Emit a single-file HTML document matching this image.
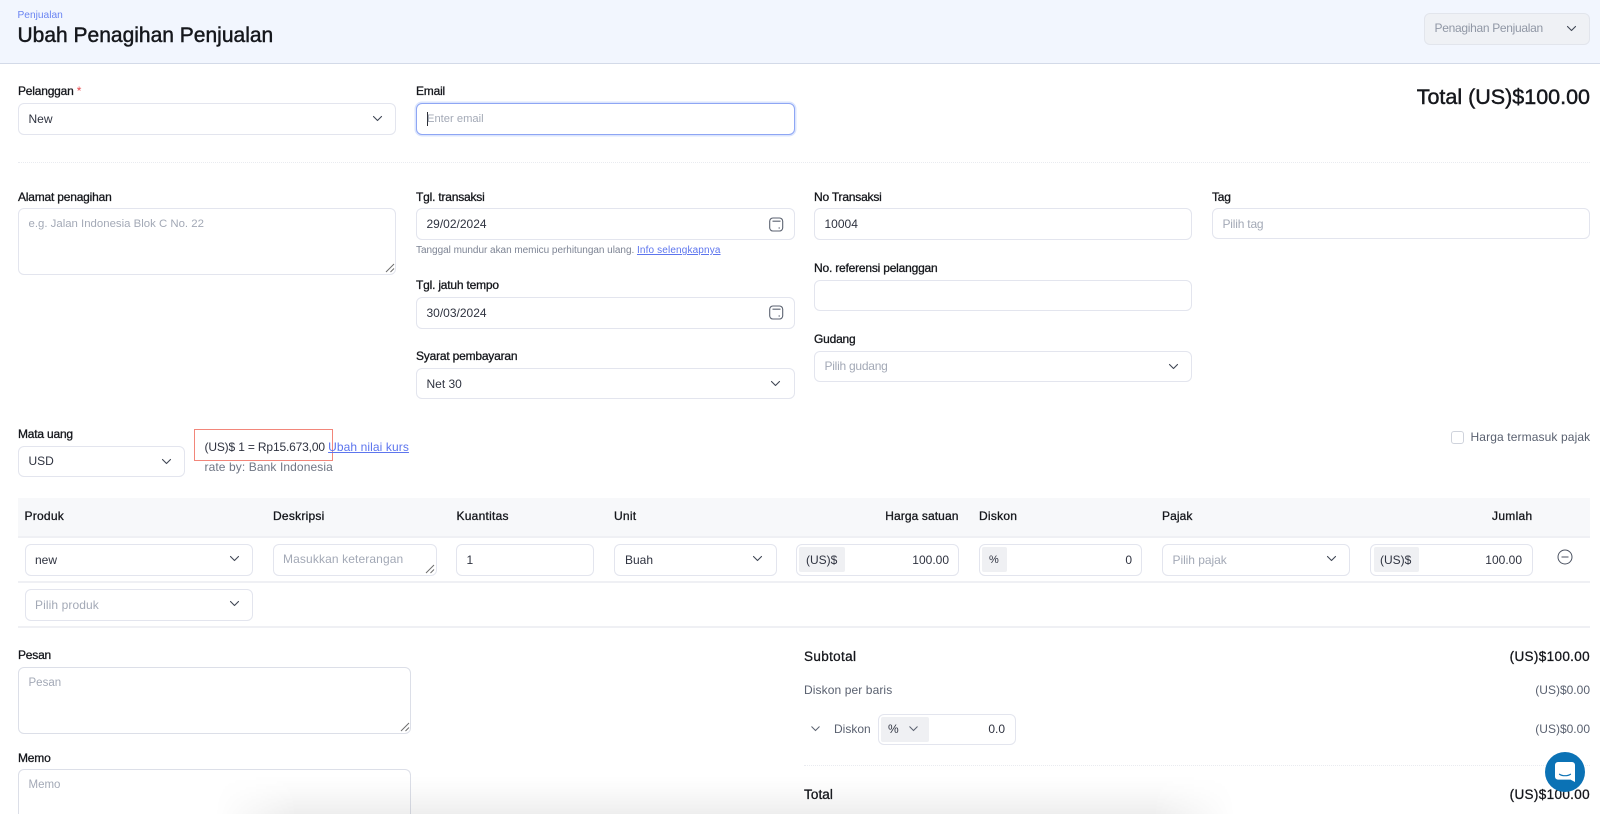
<!DOCTYPE html>
<html lang="id"><head><meta charset="utf-8"><title>Ubah Penagihan Penjualan</title>
<style>
html,body{margin:0;padding:0;background:#fff;width:1600px;height:814px;overflow:hidden}
#w{position:absolute;left:0;top:0;width:1600px;height:814px;overflow:hidden;font-family:"Liberation Sans",sans-serif;font-size:12px;color:#2f3340;filter:blur(.3px)}
.t{position:absolute;line-height:16px;height:16px;white-space:nowrap}
.r{text-align:right}
.l{color:#15171c;-webkit-text-stroke:.3px #15171c;letter-spacing:-.2px}
.h{letter-spacing:.25px}
.p{color:#a3a9b6}
.m{color:#5a6170}
a{color:#5d75ee;text-decoration:underline}
.b{position:absolute;box-sizing:border-box;background:#fff;border:1px solid #e3e5ee;border-radius:6px}
.g{position:absolute;background:#eff0f3;border-radius:2px}
svg{position:absolute;overflow:visible;fill:none}
.c{stroke:#3f4654;stroke-width:1.1;stroke-linecap:round;stroke-linejoin:round}
.ln{position:absolute;background:#eff0f4}
.d{position:absolute;height:0;border-top:1px dotted #e9ebf0}
.s{font-size:13.5px;letter-spacing:.35px;color:#15171c;-webkit-text-stroke:.3px #15171c}
</style></head><body><div id="w">

<div style="position:absolute;left:0;top:0;width:1600px;height:63px;background:#f2f6fe;border-bottom:1px solid #d3dae8;box-sizing:content-box"></div>
<div class="t" style="left:17.5px;top:7.5px;font-size:10.2px;color:#6a84f2">Penjualan</div>
<div class="t" style="left:17.5px;top:24px;line-height:24px;height:24px;font-size:21px;color:#15171c;-webkit-text-stroke:.45px #15171c">Ubah Penagihan Penjualan</div>
<div class="b" style="left:1424px;top:13px;width:166px;height:32px;background:#eff1f5;border-color:#e2e5ec"></div>
<div class="t p" style="left:1434.5px;top:20px;color:#9097a5;letter-spacing:-.3px">Penagihan Penjualan</div>
<svg style="left:1566px;top:25px" width="12" height="8"><path class="c" d="M1.5 1.5l4 4 4-4"/></svg>

<div class="t l" style="left:18px;top:83px">Pelanggan <span style="color:#e5484d;-webkit-text-stroke:0">*</span></div>
<div class="b" style="left:18px;top:103px;width:378px;height:32px"></div>
<div class="t" style="left:28.5px;top:111px">New</div>
<svg style="left:372px;top:115px" width="12" height="8"><path class="c" d="M1.5 1.5l4 4 4-4"/></svg>

<div class="t l" style="left:416px;top:83px">Email</div>
<div class="b" style="left:416px;top:103px;width:379px;height:32px;border-color:#8ea6f4;box-shadow:0 0 0 1.5px #dbe5fd"></div>
<div style="position:absolute;left:426.5px;top:112px;width:1px;height:14px;background:#2a2d35"></div>
<div class="t p" style="left:427px;top:111px;font-size:11.2px">Enter email</div>

<div class="t r" style="right:10px;top:85px;line-height:24px;height:24px;font-size:21.5px;color:#15171c;-webkit-text-stroke:.45px #15171c">Total (US)$100.00</div>
<div class="d" style="left:18px;top:162px;width:1572px"></div>

<div class="t l" style="left:18px;top:189px">Alamat penagihan</div>
<div class="b" style="left:18px;top:208px;width:378px;height:67px"></div>
<div class="t p" style="left:28.5px;top:216px;font-size:11.4px">e.g. Jalan Indonesia Blok C No. 22</div>
<svg style="left:385px;top:263px" width="10" height="10"><path d="M1 9L9 1M5.5 9L9 5.5" stroke="#6e6e6e" stroke-width="1"/></svg>

<div class="t l" style="left:416px;top:189px">Tgl. transaksi</div>
<div class="b" style="left:416px;top:208px;width:379px;height:32px"></div>
<div class="t" style="left:426.5px;top:216px">29/02/2024</div>
<svg style="left:769px;top:217px" width="15" height="15"><rect class="c" x=".7" y="1" width="13" height="13" rx="3.2" style="stroke:#5b6270"/><path d="M3.5 4.2h8M9.5 11h1.5" stroke="#5b6270" stroke-width="1.1"/></svg>
<div class="t" style="left:416px;top:243px;font-size:10px;color:#7d8494;letter-spacing:-.03px">Tanggal mundur akan memicu perhitungan ulang. <a style="letter-spacing:.14px">Info selengkapnya</a></div>

<div class="t l" style="left:416px;top:277px">Tgl. jatuh tempo</div>
<div class="b" style="left:416px;top:297px;width:379px;height:32px"></div>
<div class="t" style="left:426.5px;top:305px">30/03/2024</div>
<svg style="left:769px;top:305px" width="15" height="15"><rect class="c" x=".7" y="1" width="13" height="13" rx="3.2" style="stroke:#5b6270"/><path d="M3.5 4.2h8M9.5 11h1.5" stroke="#5b6270" stroke-width="1.1"/></svg>

<div class="t l" style="left:416px;top:348px">Syarat pembayaran</div>
<div class="b" style="left:416px;top:368px;width:379px;height:31px"></div>
<div class="t" style="left:426.5px;top:376px">Net 30</div>
<svg style="left:770px;top:380px" width="12" height="8"><path class="c" d="M1.5 1.5l4 4 4-4"/></svg>

<div class="t l" style="left:814px;top:189px">No Transaksi</div>
<div class="b" style="left:814px;top:208px;width:378px;height:32px"></div>
<div class="t" style="left:824.5px;top:216px">10004</div>
<div class="t l" style="left:814px;top:260px">No. referensi pelanggan</div>
<div class="b" style="left:814px;top:280px;width:378px;height:31px"></div>
<div class="t l" style="left:814px;top:331px">Gudang</div>
<div class="b" style="left:814px;top:351px;width:378px;height:31px"></div>
<div class="t p" style="left:824.5px;top:358px;letter-spacing:-.25px">Pilih gudang</div>
<svg style="left:1168px;top:363px" width="12" height="8"><path class="c" d="M1.5 1.5l4 4 4-4"/></svg>

<div class="t l" style="left:1212px;top:189px">Tag</div>
<div class="b" style="left:1212px;top:208px;width:378px;height:31px"></div>
<div class="t p" style="left:1222.5px;top:216px;letter-spacing:-.2px">Pilih tag</div>

<div class="t l" style="left:18px;top:426px">Mata uang</div>
<div class="b" style="left:18px;top:446px;width:167px;height:31px"></div>
<div class="t" style="left:28.5px;top:453px">USD</div>
<svg style="left:161px;top:458px" width="12" height="8"><path class="c" d="M1.5 1.5l4 4 4-4"/></svg>
<div style="position:absolute;left:194px;top:429px;width:139px;height:32px;box-sizing:border-box;border:1px solid #f2867a"></div>
<div class="t" style="left:204.5px;top:439px;letter-spacing:-.16px">(US)$ 1 = Rp15.673,00 <a style="letter-spacing:.1px">Ubah nilai kurs</a></div>
<div class="t m" style="left:204.5px;top:459px;color:#6f7684;letter-spacing:.1px">rate by: Bank Indonesia</div>
<div class="b" style="left:1451px;top:431px;width:13px;height:13px;border-radius:3px;border-color:#cfd3dc"></div>
<div class="t m" style="left:1470.5px;top:429px;letter-spacing:.12px">Harga termasuk pajak</div>

<div style="position:absolute;left:18px;top:498px;width:1572px;height:38px;background:#f7f8fa"></div>
<div class="ln" style="left:18px;top:536px;width:1572px;height:2px"></div>
<div class="t l h" style="left:24.5px;top:508px">Produk</div>
<div class="t l h" style="left:273px;top:508px">Deskripsi</div>
<div class="t l h" style="left:456.5px;top:508px">Kuantitas</div>
<div class="t l h" style="left:614px;top:508px">Unit</div>
<div class="t l r" style="right:641.5px;top:508px;letter-spacing:.1px">Harga satuan</div>
<div class="t l h" style="left:979px;top:508px">Diskon</div>
<div class="t l h" style="left:1162px;top:508px;letter-spacing:.1px">Pajak</div>
<div class="t l r h" style="right:67.5px;top:508px;letter-spacing:.3px">Jumlah</div>

<div class="b" style="left:25px;top:544px;width:228px;height:32px"></div>
<div class="t" style="left:35px;top:552px">new</div>
<svg style="left:229px;top:555px" width="12" height="8"><path class="c" d="M1.5 1.5l4 4 4-4"/></svg>
<div class="b" style="left:273px;top:544px;width:164px;height:32px"></div>
<div class="t p" style="left:283px;top:551px;letter-spacing:.12px">Masukkan keterangan</div>
<svg style="left:425px;top:564px" width="10" height="10"><path d="M1 9L9 1M5.5 9L9 5.5" stroke="#6e6e6e" stroke-width="1"/></svg>
<div class="b" style="left:456px;top:544px;width:138px;height:32px"></div>
<div class="t" style="left:466.5px;top:552px">1</div>
<div class="b" style="left:614px;top:544px;width:163px;height:32px"></div>
<div class="t" style="left:625px;top:552px">Buah</div>
<svg style="left:752px;top:555px" width="12" height="8"><path class="c" d="M1.5 1.5l4 4 4-4"/></svg>
<div class="b" style="left:796px;top:544px;width:163px;height:32px"></div>
<div class="g" style="left:799px;top:547px;width:46px;height:25px"></div>
<div class="t" style="left:806px;top:552px">(US)$</div>
<div class="t r" style="right:651px;top:552px">100.00</div>
<div class="b" style="left:979px;top:544px;width:163px;height:32px"></div>
<div class="g" style="left:982px;top:547px;width:25px;height:25px"></div>
<div class="t" style="left:989px;top:552px;font-size:11px">%</div>
<div class="t r" style="right:468px;top:552px">0</div>
<div class="b" style="left:1162px;top:544px;width:188px;height:32px"></div>
<div class="t p" style="left:1172.5px;top:552px;letter-spacing:-.05px">Pilih pajak</div>
<svg style="left:1326px;top:555px" width="12" height="8"><path class="c" d="M1.5 1.5l4 4 4-4"/></svg>
<div class="b" style="left:1370px;top:544px;width:163px;height:32px"></div>
<div class="g" style="left:1373.5px;top:547px;width:45px;height:25px"></div>
<div class="t" style="left:1380px;top:552px">(US)$</div>
<div class="t r" style="right:78px;top:552px">100.00</div>
<svg style="left:1557px;top:549px" width="16" height="16"><circle cx="8" cy="8" r="7" stroke="#4b5261" stroke-width="1"/><path d="M4.5 8h7" stroke="#4b5261" stroke-width="1"/></svg>
<div class="ln" style="left:18px;top:581px;width:1572px;height:2px"></div>
<div class="b" style="left:25px;top:589px;width:228px;height:32px"></div>
<div class="t p" style="left:35px;top:597px;letter-spacing:.1px">Pilih produk</div>
<svg style="left:229px;top:600px" width="12" height="8"><path class="c" d="M1.5 1.5l4 4 4-4"/></svg>
<div class="ln" style="left:18px;top:626px;width:1572px;height:2px"></div>

<div class="t l" style="left:18px;top:647px">Pesan</div>
<div class="b" style="left:18px;top:667px;width:393px;height:67px;border-color:#dcdfe8"></div>
<div class="t p" style="left:28.5px;top:675px;font-size:11.5px">Pesan</div>
<svg style="left:400px;top:722px" width="10" height="10"><path d="M1 9L9 1M5.5 9L9 5.5" stroke="#6e6e6e" stroke-width="1"/></svg>
<div class="t l" style="left:18px;top:750px">Memo</div>
<div class="b" style="left:18px;top:769px;width:393px;height:45px;border-color:#dcdfe8;border-bottom:0;border-radius:6px 6px 0 0"></div>
<div class="t p" style="left:28.5px;top:777px;font-size:11.5px">Memo</div>

<div class="t s" style="left:804px;top:649px">Subtotal</div>
<div class="t r s" style="right:10px;top:649px">(US)$100.00</div>
<div class="t m" style="left:804px;top:682px;letter-spacing:.1px">Diskon per baris</div>
<div class="t r m" style="right:10px;top:682px">(US)$0.00</div>
<svg style="left:810px;top:725px" width="12" height="8"><path d="M1.5 1.5l4 4 4-4" stroke="#5b6270" stroke-width="1"/></svg>
<div class="t m" style="left:834px;top:721px">Diskon</div>
<div class="b" style="left:877.5px;top:714px;width:138px;height:31px"></div>
<div class="g" style="left:881px;top:717px;width:48px;height:25px"></div>
<div class="t" style="left:888px;top:721px;font-size:12px">%</div>
<svg style="left:908px;top:725px" width="12" height="8"><path d="M1.5 1.5l4 4 4-4" stroke="#5b6270" stroke-width="1"/></svg>
<div class="t r" style="right:595px;top:721px">0.0</div>
<div class="t r m" style="right:10px;top:721px">(US)$0.00</div>
<div class="d" style="left:804px;top:765px;width:786px"></div>
<div class="t s" style="left:804px;top:787px;letter-spacing:.1px">Total</div>
<div class="t r s" style="right:10px;top:787px">(US)$100.00</div>

<div style="position:absolute;left:215px;top:776px;width:1020px;height:38px;background:linear-gradient(to bottom,rgba(0,0,0,0),rgba(0,0,0,.02) 40%,rgba(0,0,0,.065));-webkit-mask-image:linear-gradient(to right,transparent,#000 8%,#000 92%,transparent);mask-image:linear-gradient(to right,transparent,#000 8%,#000 92%,transparent)"></div>

<div style="position:absolute;left:1545px;top:752px;width:40px;height:40px;border-radius:50%;background:#0b72b5"></div>
<svg style="left:1555px;top:762px" width="20" height="21"><path d="M3 0H17a3 3 0 0 1 3 3V20L15.5 17.6H3a3 3 0 0 1-3-3V3a3 3 0 0 1 3-3z" fill="#fff"/><path d="M4.5 12.2c3 2 8 2 11 0" stroke="#0b72b5" stroke-width="1.2" stroke-linecap="round"/></svg>
</div></body></html>
